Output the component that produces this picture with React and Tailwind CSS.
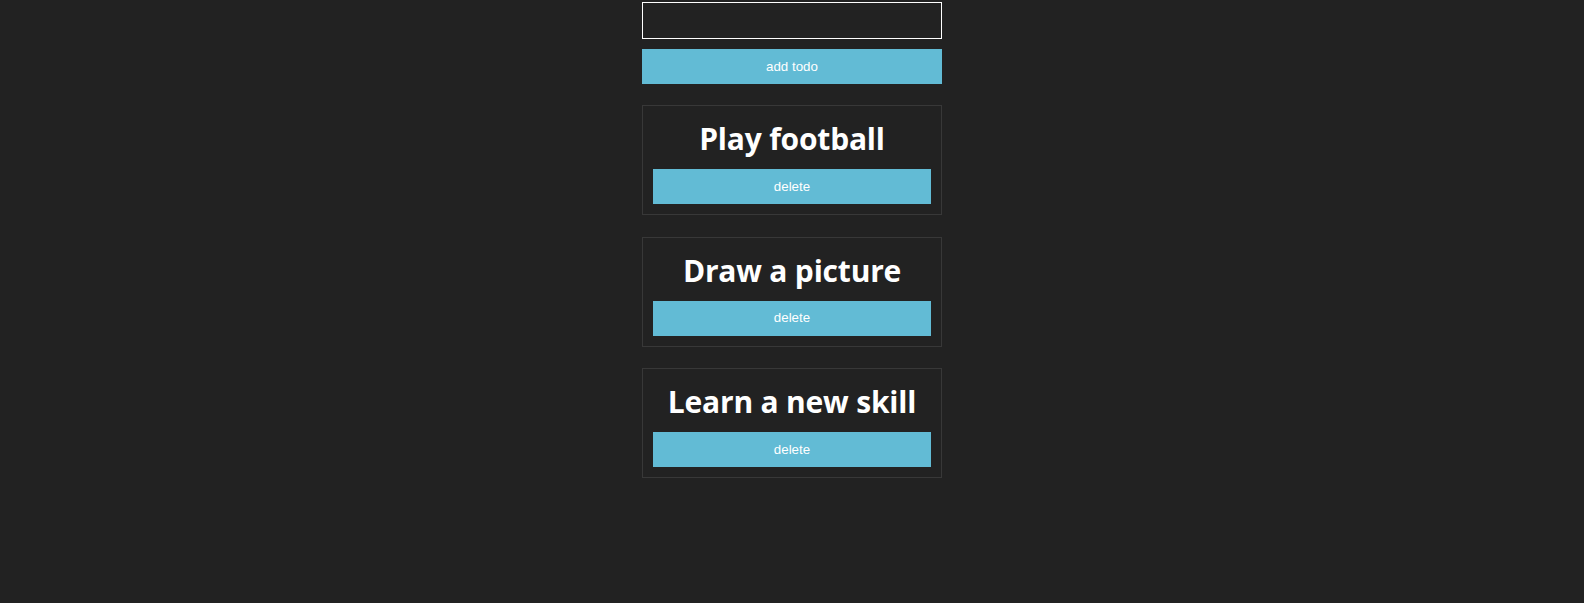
import { useState } from 'react'

const INITIAL_TODOS = [
  { id: 1, title: 'Play football' },
  { id: 2, title: 'Draw a picture' },
  { id: 3, title: 'Learn a new skill' },
]

export default function App() {
  const [todos, setTodos] = useState(INITIAL_TODOS)
  const [text, setText] = useState('')

  function addTodo() {
    if (!text.trim()) return
    setTodos([...todos, { id: Date.now(), title: text.trim() }])
    setText('')
  }

  function removeTodo(id) {
    setTodos(todos.filter((t) => t.id !== id))
  }

  return (
    <div className="min-h-[603px] bg-[#222222] pt-[2px]">
      <div className="mx-auto flex w-[300px] flex-col">
        <input
          type="text"
          value={text}
          onChange={(e) => setText(e.target.value)}
          className="h-[37px] border border-white bg-transparent px-2 text-white outline-none"
        />
        <button
          type="button"
          onClick={addTodo}
          className="mt-[10px] h-[35px] bg-[#62bbd5] font-['Liberation_Sans',Arial,sans-serif] text-[13.333px] text-white"
        >
          add todo
        </button>

        <div className="mt-[21px] flex flex-col gap-[21.5px]">
          {todos.map((t) => (
            <div key={t.id} className="flex flex-col gap-[10px] border border-[#383838] p-[10px]">
              <h1 className="pt-[2px] text-center font-['Open_Sans',sans-serif] text-[30px] font-bold leading-[41px] tracking-[-0.2px] text-white">
                {t.title}
              </h1>
              <button
                type="button"
                onClick={() => removeTodo(t.id)}
                className="h-[35px] bg-[#62bbd5] font-['Liberation_Sans',Arial,sans-serif] text-[13.333px] text-white"
              >
                delete
              </button>
            </div>
          ))}
        </div>
      </div>
    </div>
  )
}
